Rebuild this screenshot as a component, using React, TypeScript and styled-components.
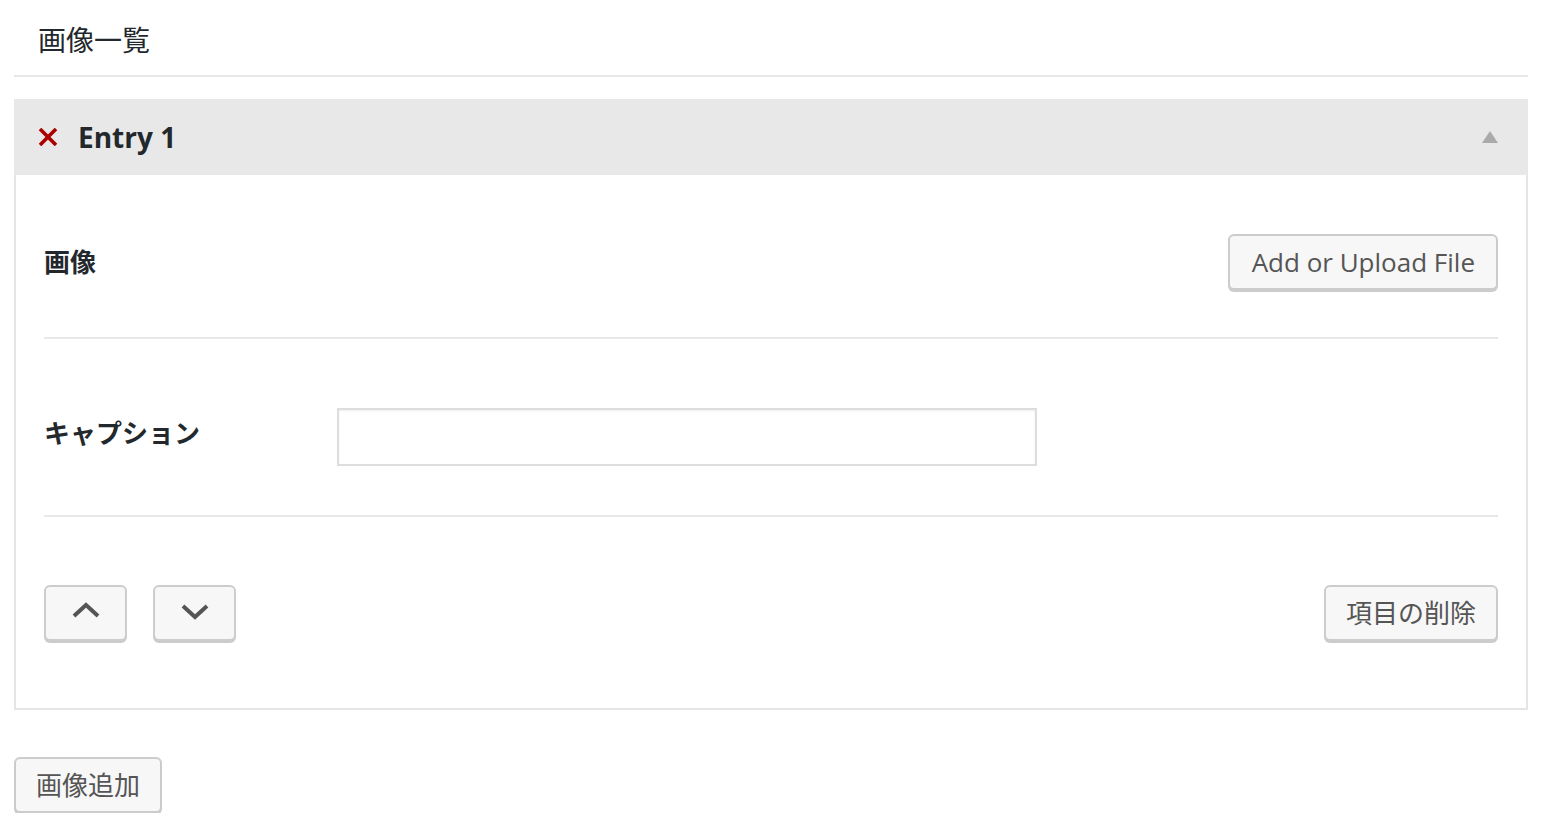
import React, { useState } from "react";
import styled, { createGlobalStyle } from "styled-components";

const GlobalStyle = createGlobalStyle`
  body {
    margin: 0;
    background: #ffffff;
    font-family: "Open Sans", "Noto Sans CJK JP", sans-serif;
    color: #23282d;
  }
`;

const Page = styled.div`
  padding: 0 18px 0 14px;
`;

const Heading = styled.h2`
  margin: 0;
  padding: 20px 0 15px 24px;
  font-size: 28px;
  line-height: 40px;
  font-weight: 400;
  border-bottom: 2px solid #e8e8e8;
`;

const Panel = styled.div`
  margin-top: 22px;
  border: 2px solid #e5e5e5;
  border-top: none;
  background: #fff;
`;

const PanelHeader = styled.div`
  display: flex;
  align-items: center;
  height: 76px;
  margin: 0 -2px;
  padding: 0 30px 0 24px;
  background: #e8e8e8;
`;

const RemoveIcon = styled.svg`
  width: 20px;
  height: 18px;
  flex-shrink: 0;
`;

const EntryTitle = styled.span`
  margin-left: 20px;
  font-size: 28px;
  line-height: 40px;
  font-weight: 700;
  color: #23282d;
  flex: 1;
`;

const Toggle = styled.span`
  width: 0;
  height: 0;
  border-left: 8px solid transparent;
  border-right: 8px solid transparent;
  border-bottom: 12px solid #aaa;
`;

const PanelBody = styled.div`
  padding: 0 28px;
`;

const Row = styled.div<{ $top: number; $bottom: number; $last?: boolean }>`
  display: flex;
  align-items: flex-start;
  padding: ${(p) => p.$top}px 0 ${(p) => p.$bottom}px;
  border-bottom: ${(p) => (p.$last ? "none" : "2px solid #e8e8e8")};
`;

const Label = styled.div<{ $offset: number }>`
  width: 293px;
  flex-shrink: 0;
  padding-top: ${(p) => p.$offset}px;
  font-size: 26px;
  line-height: 32px;
  font-weight: 700;
  color: #23282d;
`;

const Spacer = styled.div`
  flex: 1;
`;

const Button = styled.button<{ $wide?: boolean }>`
  height: 56px;
  padding: 0 ${(p) => (p.$wide ? 20 : 0)}px;
  min-width: ${(p) => (p.$wide ? "auto" : "83px")};
  display: inline-flex;
  align-items: center;
  justify-content: center;
  border: 2px solid #cccccc;
  border-radius: 6px;
  background: #f7f7f7;
  box-shadow: 0 2px 0 #cccccc;
  color: #555555;
  font-family: "Open Sans", "Noto Sans CJK JP", sans-serif;
  font-size: 26px;
  line-height: 32px;
  cursor: pointer;
`;

const UploadButton = styled(Button)`
  padding: 0 21px 0 22px;
`;

const ArrowGroup = styled.div`
  display: flex;
  gap: 26px;
`;

const CaptionInput = styled.input`
  width: 700px;
  height: 58px;
  box-sizing: border-box;
  border: 2px solid #dddddd;
  box-shadow: inset 0 1px 2px rgba(0, 0, 0, 0.07);
  font-size: 26px;
  padding: 0 10px;
  outline: none;
`;

const Chevron = styled.svg<{ $lift: number }>`
  width: 28px;
  height: 16px;
  margin-bottom: ${(p) => p.$lift * 2}px;
`;

const AddButton = styled(Button)`
  margin-top: 47px;
`;

function App() {
  const [caption, setCaption] = useState("");

  return (
    <Page>
      <GlobalStyle />
      <Heading>画像一覧</Heading>
      <Panel>
        <PanelHeader>
          <RemoveIcon viewBox="0 0 20 18">
            <path d="M2 1 L18 17 M18 1 L2 17" stroke="#aa0000" strokeWidth="3.6" fill="none" />
          </RemoveIcon>
          <EntryTitle>Entry 1</EntryTitle>
          <Toggle />
        </PanelHeader>
        <PanelBody>
          <Row $top={59} $bottom={47}>
            <Label $offset={12}>画像</Label>
            <Spacer />
            <UploadButton $wide>Add or Upload File</UploadButton>
          </Row>
          <Row $top={69} $bottom={49}>
            <Label $offset={9}>キャプション</Label>
            <CaptionInput value={caption} onChange={(e) => setCaption(e.target.value)} />
          </Row>
          <Row $top={68} $bottom={67} $last>
            <ArrowGroup>
              <Button>
                <Chevron $lift={3} viewBox="0 0 28 16">
                  <path d="M2 14 L14 3 L26 14" stroke="#555" strokeWidth="4" fill="none" />
                </Chevron>
              </Button>
              <Button>
                <Chevron $lift={1} viewBox="0 0 28 16">
                  <path d="M2 2 L14 13 L26 2" stroke="#555" strokeWidth="4" fill="none" />
                </Chevron>
              </Button>
            </ArrowGroup>
            <Spacer />
            <Button $wide>項目の削除</Button>
          </Row>
        </PanelBody>
      </Panel>
      <AddButton $wide>画像追加</AddButton>
    </Page>
  );
}

export default App;
